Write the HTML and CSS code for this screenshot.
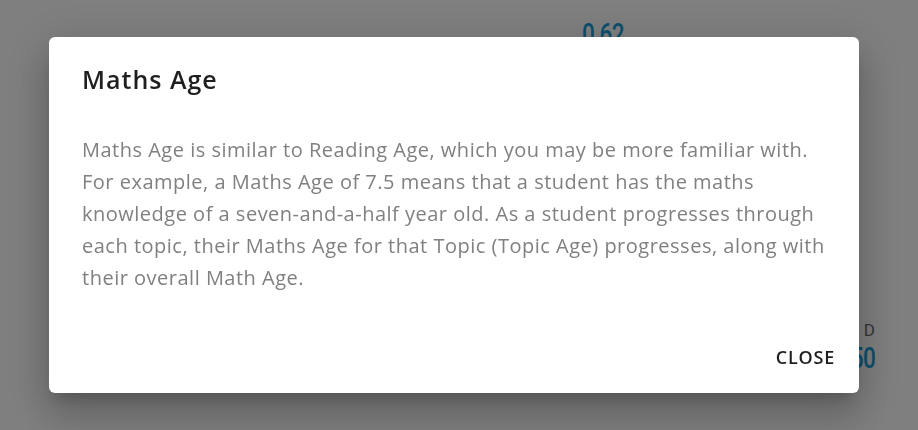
FILE: index.html
```html
<!doctype html>
<html>
  <head>
    <title>Maths Age</title>
    <link rel="stylesheet" href="styles.css">
  </head>
  <body>
    <main class="page">
      <div class="stat stat-top">
        <span class="stat-value">0.62</span>
      </div>
      <div class="stat stat-side">
        <span class="stat-label">D</span>
        <span class="stat-value">50</span>
      </div>
    </main>
    <div class="backdrop">
      <div class="dialog">
        <h2 class="dialog-title">Maths Age</h2>
        <p class="dialog-text">
          Maths Age is similar to Reading Age, which you may be more familiar with.<br>
          For example, a Maths Age of 7.5 means that a student has the maths<br>
          knowledge of a seven-and-a-half year old. As a student progresses through<br>
          each topic, their Maths Age for that Topic (Topic Age) progresses, along with<br>
          their overall Math Age.
        </p>
        <div class="dialog-actions">
          <button class="close-button">Close</button>
        </div>
      </div>
    </div>
  </body>
</html>
```

FILE: styles.css
```css
body {
  margin: 0;
  font-family: "Open Sans", sans-serif;
  background-color: #ffffff;
  overflow: hidden;
}
.page {
  position: relative;
  width: 918px;
  height: 430px;
}
.stat {
  position: absolute;
  display: flex;
  flex-direction: column;
  align-items: flex-end;
  font-family: "Roboto", sans-serif;
}
.stat-top {
  left: 582px;
  top: 18px;
}
.stat-side {
  right: 43px;
  top: 318px;
}
.stat-value {
  color: #16a0dc;
  font-size: 29px;
  font-weight: 500;
  line-height: 32px;
  letter-spacing: -1px;
  transform: scaleX(0.78);
  transform-origin: right;
}
.stat-top .stat-value {
  transform-origin: left;
}
.stat-label {
  color: #6a6a6a;
  font-size: 17px;
  line-height: 24px;
}

.backdrop {
  position: fixed;
  top: 0;
  left: 0;
  right: 0;
  bottom: 0;
  background-color: rgba(0, 0, 0, 0.5);
  display: flex;
  align-items: flex-start;
  padding-left: 49px;
}
.dialog {
  margin-top: 37px;
  width: 810px;
  height: 356px;
  box-sizing: border-box;
  background-color: #ffffff;
  border-radius: 6px;
  box-shadow: 0px 11px 15px -7px rgba(0, 0, 0, 0.2),
    0px 24px 38px 3px rgba(0, 0, 0, 0.14),
    0px 9px 46px 8px rgba(0, 0, 0, 0.12);
  padding: 26px 24px 20px 33px;
  display: flex;
  flex-direction: column;
}
.dialog-title {
  margin: 0;
  font-size: 25px;
  font-weight: 600;
  letter-spacing: 1px;
  color: #1f1f1f;
  line-height: 32px;
}
.dialog-text {
  margin: 39px 0 0;
  font-size: 20px;
  letter-spacing: 0.5px;
  line-height: 32px;
  color: #808080;
  white-space: nowrap;
}
.dialog-actions {
  margin-top: auto;
  display: flex;
  justify-content: flex-end;
}
.close-button {
  font-family: "Open Sans", sans-serif;
  font-size: 18px;
  font-weight: 600;
  text-transform: uppercase;
  letter-spacing: 0.8px;
  color: #1f1f1f;
  background: transparent;
  border: none;
  padding: 4px 0;
}
```
